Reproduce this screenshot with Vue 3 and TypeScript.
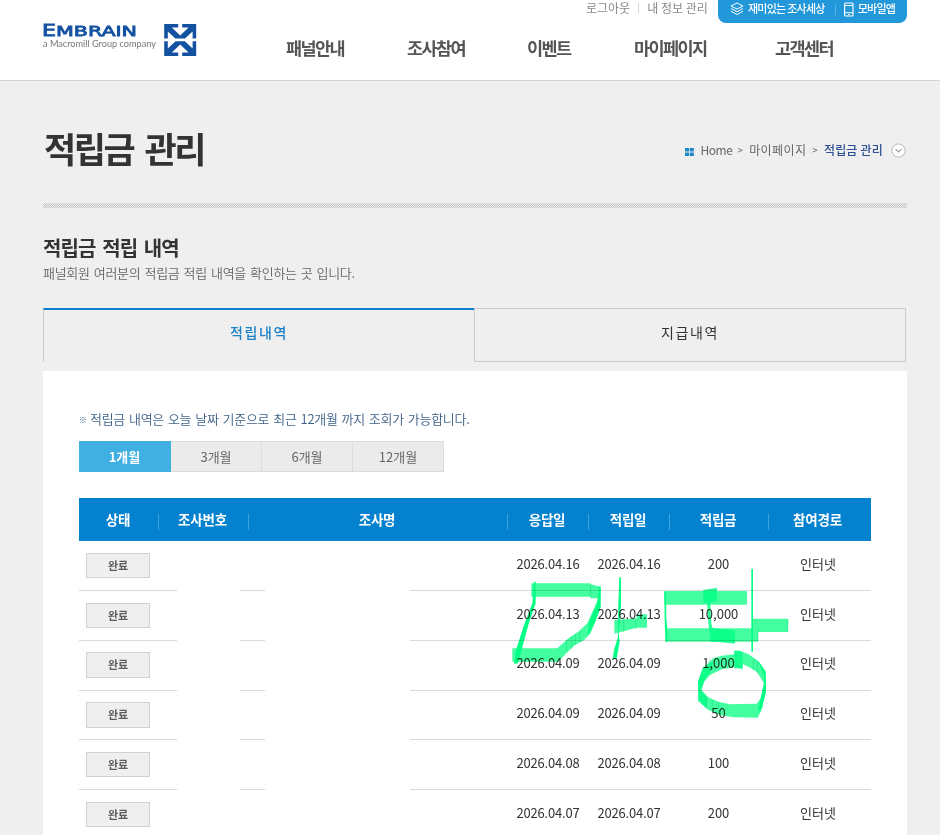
<script setup lang="ts">
interface RewardRow {
  status: string
  answered: string
  credited: string
  amount: string
  channel: string
}

const menu: string[] = ['패널안내', '조사참여', '이벤트', '마이페이지', '고객센터']
const periods: string[] = ['1개월', '3개월', '6개월', '12개월']
const columns: string[] = ['상태', '조사번호', '조사명', '응답일', '적립일', '적립금', '참여경로']

const row = (day: string, amount: string): RewardRow => ({
  status: '완료',
  answered: `2026.04.${day}`,
  credited: `2026.04.${day}`,
  amount,
  channel: '인터넷',
})

const rows: RewardRow[] = [
  row('16', '200'),
  row('13', '10,000'),
  row('09', '1,000'),
  row('09', '50'),
  row('08', '100'),
  row('07', '200'),
]
</script>

<template>
  <div class="page">
    <header class="header">
      <a class="logo">
        <svg width="154" height="34" viewBox="0 0 154 34">
          <text class="brand" y="12.800"><tspan x="-1" font-size="15.500" textLength="14" lengthAdjust="spacingAndGlyphs">E</tspan><tspan x="13" font-size="14" textLength="81" lengthAdjust="spacingAndGlyphs">MBRAIN</tspan></text>
          <text class="tagline" x="0" y="24" textLength="113" lengthAdjust="spacingAndGlyphs">a Macromill Group company</text>
          <g transform="translate(121.2 1)" fill="#1352a1">
            <path d="M0 0H14V3.600H7.600L16 11.500L24.400 3.600H18V0H32V14.500H28.400V7.600L20.800 14.500H11.200L3.600 7.600V14.500H0Z" />
            <path d="M0 17.200H3.600V24.400L11.400 17.200H20.600L28.400 24.400V17.200H32V32H18V28.400H24.400L16 20.600L7.600 28.400H14V32H0Z" />
          </g>
        </svg>
      </a>
      <nav class="menu">
        <a v-for="item in menu" :key="item">{{ item }}</a>
      </nav>
      <div class="util">
        <a>로그아웃</a><i></i><a>내 정보 관리</a>
      </div>
      <div class="quick">
        <svg class="layers" width="14" height="14" viewBox="0 0 14 14" fill="none" stroke="#fff" stroke-width="1" stroke-linejoin="round">
          <path d="M7 1L13 4L7 7L1 4Z" />
          <path d="M1 6.500L7 9.700L13 6.500M1 9.200L7 12.500L13 9.200" />
        </svg>
        <a>재미있는 조사세상</a>
        <i></i>
        <svg class="phone" width="10" height="15" viewBox="0 0 10 15" fill="none" stroke="#fff" stroke-width="1.100">
          <rect x=".6" y="1" width="8.400" height="13" rx="1" />
          <path d="M.6 3.500H9M.6 10.800H9M4 12.500H5.700" />
        </svg>
        <a>모바일앱</a>
      </div>
    </header>

    <main class="content">
      <div class="title-bar">
        <h1>적립금 관리</h1>
        <div class="crumbs">
          <svg width="9" height="8" viewBox="0 0 9 8"><path fill="#1a86c8" d="M0 0H4V3.600H0ZM4.800 0H8.800V3.600H4.800ZM0 4.400H4V8H0ZM4.800 4.400H8.800V8H4.800Z" /></svg>
          <a class="home">Home</a>
          <span class="gt">&gt;</span>
          <a class="mid">마이페이지</a>
          <span class="gt">&gt;</span>
          <b>적립금 관리</b>
          <svg class="fold" width="15" height="15" viewBox="0 0 15 15" fill="none">
            <circle cx="7.500" cy="7.500" r="6.600" fill="#fff" stroke="#b9b9b9" />
            <path d="M4.500 6.200L7.500 9L10.500 6.200" stroke="#999" stroke-width="1.100" />
          </svg>
        </div>
      </div>
      <div class="strip"></div>

      <h2>적립금 적립 내역</h2>
      <p class="desc">패널회원 여러분의 적립금 적립 내역을 확인하는 곳 입니다.</p>

      <div class="tabs">
        <a class="tab on">적립내역</a>
        <a class="tab">지급내역</a>
      </div>

      <section class="panel">
        <p class="note"><span>※</span>적립금 내역은 오늘 날짜 기준으로 최근 12개월 까지 조회가 가능합니다.</p>
        <div class="periods">
          <a v-for="(p, i) in periods" :key="p" :class="{ on: i === 0 }">{{ p }}</a>
        </div>

        <div class="table">
          <div class="grid thead">
            <span v-for="c in columns" :key="c">{{ c }}</span>
          </div>
          <div v-for="(r, i) in rows" :key="i" class="grid row">
            <span><em>{{ r.status }}</em></span>
            <span></span>
            <span></span>
            <span class="date">{{ r.answered }}</span>
            <span class="date">{{ r.credited }}</span>
            <span>{{ r.amount }}</span>
            <span>{{ r.channel }}</span>
          </div>

          <!-- highlighter marks over the rows -->
          <svg class="marker" width="300" height="240" viewBox="0 0 900 720">
            <g fill="#43ffa0">
              <path d="M94 280H272V283L302 290V325H272V320H94Z" />
              <path d="M37 475H175V515H37Z" />
              <path d="M300 320L302 350L272 430L250 452L225 465L200 488L175 515L172 475L205 445L235 425L262 400L297 320Z" />
              <path d="M343 390L410 385V373H441V413H410L343 431Z" />
              <path d="M493 303H740V344H493Z" />
              <path d="M498 415H774V455H498Z" />
              <path d="M758 386H864V426H758Z" />
              <path fill-rule="evenodd" d="M703 482H718L745 492L775 513L797 545L798 605L785 660L773 683L700 682L660 675L625 660L597 630L594 575L608 535L640 505L665 497L703 493ZM728 522V537L700 532L665 538L630 555L612 575L604 600L625 622L655 635L690 643L770 641L782 625L792 580L770 545L745 530Z" />
            </g>
            <g fill="#04ff86">
              <path d="M102 275H107V340L85 405L54 520L42 522L48 480L72 405L97 340Z" />
              <path d="M297 290H302V350L285 398L262 438L268 392L291 345Z" />
              <path d="M358 262H363V340L360 400L356 425L359 455L350 505L338 508L342 480L354 440L355 340Z" />
              <path d="M493 305H498L499 385L502 418V455H496L494 385Z" />
              <path d="M610 300L651 293V333L631 337L634 400L638 415L705 421V461L650 455H632L625 400L621 338H610Z" opacity=".82" />
              <path d="M754 237H759V485H754Z" />
              <path d="M703 482H718L728 486V535H703Z" opacity=".75" />
              <path d="M775 513L797 545L798 605L785 655L773 665L782 625L792 580L792 560Z" />
              <path d="M608 535L594 575V632L618 655L622 625L604 600L612 575L630 545L640 515Z" opacity=".8" />
            </g>
            <path d="M200 450V488M215 440V476M226 432V465M240 422V456M272 283V322M371 388V426M408 386V416M630 505V555M760 505V540M772 514V548M620 625V658M637 630V664M655 635V674M864 388V425M740 305V342M774 418V453" stroke="#05d878" stroke-width="2" fill="none" opacity=".65" />
          </svg>
        </div>
      </section>
    </main>
  </div>
</template>

<style>
body {
  background: #efefef;
  overflow: hidden;
}
</style>

<style scoped>
.page {
  width: 940px;
  height: 835px;
  overflow: hidden;
  background: #efefef;
  color: #333;
  font: 13px/20px 'Noto Sans CJK KR', sans-serif;
}

h1, h2, p {
  margin: 0;
}

.header {
  display: grid;
  grid-template-columns: 243px 343px 132px 189px;
  height: 80px;
  background: #fff;
  border-bottom: 1px solid #d3d3d3;
}

.logo {
  padding: 23px 0 0 43px;
}

.logo svg {
  display: block;
  overflow: visible;
}

.brand {
  font-family: 'DejaVu Sans', sans-serif;
  fill: #1352a1;
  stroke: #1352a1;
  stroke-width: 0.8px;
}

.tagline {
  font-family: Lato, sans-serif;
  font-size: 9.5px;
  fill: #777;
}

.menu {
  display: flex;
  padding: 35px 0 0 43px;
  white-space: nowrap;
  font-size: 17.500px;
  line-height: 26px;
  font-weight: 700;
  letter-spacing: -1.6px;
  color: #555;
}

.menu a {
  flex: none;
}

.menu a:nth-child(1) { width: 121px; }
.menu a:nth-child(2) { width: 120px; }
.menu a:nth-child(3) { width: 107px; }
.menu a:nth-child(4) { width: 141px; }

.util {
  display: flex;
  align-items: flex-start;
  white-space: nowrap;
  font-size: 12px;
  line-height: 16px;
  color: #888;
}

.util i {
  width: 1px;
  height: 10px;
  margin: 3px 8px 0;
  background: #d6d6d6;
}

.quick {
  display: flex;
  align-items: flex-start;
  height: 23px;
  padding-left: 12px;
  border-radius: 0 0 8px 8px;
  background: #2297da;
  color: #fff;
  font-size: 11px;
  font-weight: 500;
  line-height: 17px;
  letter-spacing: -0.75px;
  white-space: nowrap;
}

.layers {
  margin: 2px 4px 0 0;
}

.quick i {
  width: 1px;
  height: 10px;
  margin: 5px 8px 0 10px;
  background: #57b2e6;
}

.phone {
  margin: 2px 4px 0 0;
}

.content {
  width: 864px;
  margin-left: 43px;
}

.title-bar {
  display: flex;
  justify-content: space-between;
  height: 122px;
}

h1 {
  padding: 41px 0 0 1px;
  font-size: 35px;
  line-height: 51px;
  letter-spacing: -2.4px;
  word-spacing: 5.500px;
  color: #333;
}

.crumbs {
  display: flex;
  align-items: center;
  height: 20px;
  margin-top: 59px;
  padding-right: 1px;
  font-size: 12px;
  white-space: nowrap;
  color: #666;
}

.crumbs > svg {
  margin-top: 3px;
}

.home {
  margin-left: 6px;
  letter-spacing: -0.4px;
}

.mid { letter-spacing: 0.4px; }
.gt { margin: 0 6px 0 5px; font-size: 10px; }
.mid + .gt { margin-left: 6px; }

.crumbs b {
  color: #2d4f93;
  font-weight: 500;
  letter-spacing: 0.2px;
}

.crumbs .fold {
  margin: 1px 0 0 8px;
}

.strip {
  height: 5px;
  background: conic-gradient(#c6c6c6 25%, #ececec 0 50%, #c6c6c6 0 75%, #ececec 0) 0 0 / 2px 2px;
}

h2 {
  padding-top: 25px;
  font-size: 20px;
  line-height: 30px;
  letter-spacing: -0.9px;
  word-spacing: 3px;
  color: #333;
}

.desc {
  line-height: 20px;
  font-weight: 350;
  letter-spacing: -0.3px;
  word-spacing: 1.5px;
  color: #666;
}

.tabs {
  display: flex;
  height: 54px;
  margin-top: 25px;
}

.tab {
  box-sizing: border-box;
  width: 432px;
  border: 1px solid #cbcbcb;
  line-height: 47px;
  text-align: center;
  font-size: 14px;
  letter-spacing: 1.6px;
}

.tab.on {
  width: 431px;
  border-top: 2px solid #0d80cb;
  border-right: 0;
  border-bottom: 0;
  line-height: 45px;
  font-weight: 500;
  color: #1a80c8;
}

.panel {
  margin-top: 9px;
  padding: 38px 36px 0;
  background: #fff;
}

.note {
  display: flex;
  height: 20px;
  line-height: 20px;
  font-weight: 350;
  letter-spacing: -0.3px;
  word-spacing: 1.4px;
  color: #3f6288;
}

.note span {
  width: 11px;
  font-size: 8px;
  line-height: 21px;
}

.periods {
  display: flex;
  margin-top: 12px;
}

.periods a {
  box-sizing: border-box;
  width: 91px;
  height: 31px;
  border: 1px solid #dcdcdc;
  border-left: 0;
  background: #ebebeb;
  line-height: 30px;
  text-align: center;
  color: #666;
}

.periods a.on {
  width: 92px;
  border-color: #40b0e2;
  background: #40b0e2;
  font-weight: 700;
  color: #fff;
}

.table {
  position: relative;
  margin-top: 26px;
}

.grid {
  display: grid;
  grid-template-columns: 80px 90px 259px 81px 81px 99px 102px;
  text-align: center;
}

.thead {
  height: 43px;
  background: #0582cf;
  color: #fff;
  font-size: 13.500px;
  font-weight: 700;
  letter-spacing: -0.2px;
  line-height: 42px;
}

.thead span {
  padding-right: 3px;
  background: linear-gradient(#3ba4e0, #3ba4e0) 100% 16px / 1px 16px no-repeat;
}

.thead span:first-child {
  padding-right: 2px;
}

.thead span:last-child {
  padding-right: 5px;
  background: none;
}

.row {
  height: 50px;
  background: linear-gradient(90deg, #d9d9d9 98px, #fff 98px 161px, #d9d9d9 161px 186px, #fff 186px 331px, #d9d9d9 331px) 0 100% / 100% 1px no-repeat;
  line-height: 46px;
}

.row:nth-child(4),
.row:nth-child(5) {
  line-height: 44px;
}

.row:nth-child(5) {
  height: 49px;
}

.row span {
  padding-right: 2px;
}

.row .date {
  padding-right: 1px;
  letter-spacing: -0.2px;
}

.row span:last-child {
  padding-right: 4px;
}

.row em {
  display: block;
  box-sizing: border-box;
  width: 64px;
  height: 25px;
  margin: 12px 0 0 7px;
  border: 1px solid #d2d2d2;
  background: #efefef;
  color: #5c5c5c;
  font-size: 11px;
  font-style: normal;
  font-weight: 700;
  line-height: 23px;
}

.row:nth-child(4) em,
.row:nth-child(5) em {
  height: 26px;
  margin-top: 11px;
}

.marker {
  position: absolute;
  left: 421px;
  top: -8px;
  mix-blend-mode: multiply;
}
</style>
